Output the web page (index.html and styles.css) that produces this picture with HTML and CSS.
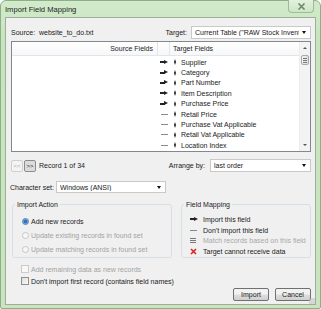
FILE: index.html
```html
<!DOCTYPE html>
<html lang="en">
<head>
    <meta charset="UTF-8">
    <title>Import Field Mapping</title>
    <link rel="stylesheet" href="styles.css">
</head>
<body>
<div class="window">
    <div class="titlebar">
        <span class="title">Import Field Mapping</span>
        <span class="close"><svg width="9" height="7" viewBox="0 0 9 7"><path d="M1.5 0.5 L7.5 6.5 M7.5 0.5 L1.5 6.5" stroke="#6f8a6c" stroke-width="1.6"/></svg></span>
    </div>
    <div class="content">
        <div class="top-row">
            <span class="source">Source:&nbsp; website_to_do.txt</span>
            <span class="lbl">Target:</span>
            <div class="select target-select"><span class="val">Current Table ("RAW Stock Inventc</span><span class="caret"></span></div>
        </div>

        <div class="grid">
            <div class="grid-main">
                <div class="grid-head">
                    <div class="col-src">Source Fields</div>
                    <div class="col-arrow"></div>
                    <div class="col-tgt">Target Fields</div>
                </div>
                <div class="grid-body">
                    <div class="grid-row"><div class="col-src"></div><div class="col-arrow"><i class="ic-arrow"></i></div><div class="col-tgt"><i class="handle"></i>Supplier</div></div>
                    <div class="grid-row"><div class="col-src"></div><div class="col-arrow"><i class="ic-arrow"></i></div><div class="col-tgt"><i class="handle"></i>Category</div></div>
                    <div class="grid-row"><div class="col-src"></div><div class="col-arrow"><i class="ic-arrow"></i></div><div class="col-tgt"><i class="handle"></i>Part Number</div></div>
                    <div class="grid-row"><div class="col-src"></div><div class="col-arrow"><i class="ic-arrow"></i></div><div class="col-tgt"><i class="handle"></i>Item Description</div></div>
                    <div class="grid-row"><div class="col-src"></div><div class="col-arrow"><i class="ic-arrow"></i></div><div class="col-tgt"><i class="handle"></i>Purchase Price</div></div>
                    <div class="grid-row"><div class="col-src"></div><div class="col-arrow"><i class="ic-dash"></i></div><div class="col-tgt"><i class="handle"></i>Retail Price</div></div>
                    <div class="grid-row"><div class="col-src"></div><div class="col-arrow"><i class="ic-dash"></i></div><div class="col-tgt"><i class="handle"></i>Purchase Vat Applicable</div></div>
                    <div class="grid-row"><div class="col-src"></div><div class="col-arrow"><i class="ic-dash"></i></div><div class="col-tgt"><i class="handle"></i>Retail Vat Applicable</div></div>
                    <div class="grid-row"><div class="col-src"></div><div class="col-arrow"><i class="ic-dash"></i></div><div class="col-tgt"><i class="handle"></i>Location Index</div></div>
                </div>
            </div>
            <div class="scrollbar">
                <div class="sb-btn"><i class="tri-up"></i></div>
                <div class="sb-track">
                    <div class="sb-thumb"><i></i><i></i><i></i></div>
                </div>
                <div class="sb-btn"><i class="tri-down"></i></div>
            </div>
        </div>

        <div class="nav-row">
            <span class="navbtn disabled">&lt;&lt;</span>
            <span class="navbtn">&gt;&gt;</span>
            <span class="record">Record 1 of 34</span>
            <span class="lbl arrange">Arrange by:</span>
            <div class="select arrange-select"><span class="val">last order</span><span class="caret"></span></div>
        </div>

        <div class="charset-row">
            <span class="lbl">Character set:</span>
            <div class="select charset-select"><span class="val">Windows (ANSI)</span><span class="caret"></span></div>
        </div>

        <div class="groups">
            <fieldset class="group action">
                <legend>Import Action</legend>
                <div class="opt"><i class="radio on"></i>Add new records</div>
                <div class="opt off"><i class="radio"></i>Update existing records in found set</div>
                <div class="opt off"><i class="radio"></i>Update matching records in found set</div>
            </fieldset>
            <fieldset class="group legend-box">
                <legend>Field Mapping</legend>
                <div class="key"><span class="key-ic"><i class="ic-arrow"></i></span>Import this field</div>
                <div class="key"><span class="key-ic"><i class="ic-dash"></i></span>Don't import this field</div>
                <div class="key off"><span class="key-ic"><i class="ic-match"></i></span>Match records based on this field</div>
                <div class="key"><span class="key-ic"><svg width="7" height="7" viewBox="0 0 7 7"><path d="M1 1 L6 6 M6 1 L1 6" stroke="#e02020" stroke-width="1.6"/></svg></span>Target cannot receive data</div>
            </fieldset>
        </div>

        <div class="checks">
            <div class="check off"><i class="box"></i>Add remaining data as new records</div>
            <div class="check"><i class="box"></i>Don't import first record (contains field names)</div>
        </div>

        <div class="buttons">
            <span class="btn">Import</span>
            <span class="btn">Cancel</span>
        </div>
        <div class="grip"></div>
    </div>
</div>
</body>
</html>
```

FILE: styles.css
```css
* { box-sizing: border-box; margin: 0; padding: 0; }
body { font-family: "Liberation Sans", Arial, sans-serif; font-size: 7px; color: #1a1a1a; background: #fff; }

.window {
    width: 321px; height: 309px; display: flex; flex-direction: column;
    background: linear-gradient(#d2ebcb, #c6e4bd 40px, #c8e5c0);
    border: 1px solid #8fae8a; border-radius: 6px 6px 2px 2px;
}
.titlebar { height: 16px; display: flex; align-items: flex-start; padding-left: 4px; }
.title { font-size: 7.6px; line-height: 12px; padding-top: 3px; color: #222; }
.close {
    margin-left: auto; margin-right: 6px; width: 26px; height: 13px; margin-top: -1px;
    display: flex; align-items: center; justify-content: center;
    border: 1px solid #9fbc99; border-top: none; border-radius: 0 0 4px 4px;
    background: linear-gradient(#e3f1df, #cde6c6);
}

.content {
    flex: 1; margin: 0 4px 3px 4px; background: #f0f0f0;
    border: 1px solid #9eae9b; padding: 0 4px 0 5px; position: relative;
}

.lbl { color: #1a1a1a; }
.select {
    height: 13px; background: #fff; border: 1px solid #c9c9c9;
    display: flex; align-items: center; padding-left: 3px; overflow: hidden;
}
.select .val { flex: 1; white-space: nowrap; overflow: hidden; }
.caret { width: 0; height: 0; border: 2.5px solid transparent; border-top: 3px solid #111; border-bottom: none; margin: 0 4px 0 3px; }

.top-row { height: 13px; margin-top: 8px; display: flex; align-items: center; }
.source { flex: 1; }
.top-row .lbl { margin-right: 4px; }
.target-select { width: 120px; }

.grid {
    margin-top: 2px; height: 111px; display: flex;
    background: #fff; border: 1px solid #828790;
}
.grid-main { flex: 1; display: flex; flex-direction: column; }
.grid-head { height: 14px; display: flex; border-bottom: 1px solid #e3e5e8; background: linear-gradient(#fff, #f6f7f8); }
.grid-head > div { line-height: 13px; color: #222; }
.grid-head .col-src, .grid-head .col-arrow { border-right: 1px solid #e3e5e8; }
.col-src { width: 146px; text-align: right; padding-right: 4px; }
.col-arrow { width: 12px; display: flex; align-items: center; justify-content: center; }
.col-tgt { flex: 1; padding-left: 3px; display: flex; align-items: center; white-space: nowrap; }
.grid-body { padding-top: 1px; }
.grid-row { height: 10.4px; display: flex; }
.grid-row .col-tgt { padding-left: 4px; }

.ic-arrow { display: inline-block; position: relative; width: 8px; height: 5px; }
.ic-arrow::before { content: ""; position: absolute; left: 0; top: 1.5px; width: 5px; height: 2px; background: #222; }
.ic-arrow::after { content: ""; position: absolute; right: 0; top: 0; border-left: 4px solid #222; border-top: 2.5px solid transparent; border-bottom: 2.5px solid transparent; }
.ic-dash { display: inline-block; width: 7px; height: 1px; background: #8a8a8a; }
.ic-match { display: inline-block; width: 6px; height: 5px; border-top: 1px solid #777; border-bottom: 1px solid #777; position: relative; }
.ic-match::after { content: ""; position: absolute; left: 0; right: 0; top: 1px; height: 1px; background: #777; }
.handle { display: inline-block; position: relative; width: 3px; height: 6px; margin-right: 4px; }
.handle::before, .handle::after { content: ""; position: absolute; left: 0; border-left: 1.5px solid transparent; border-right: 1.5px solid transparent; }
.handle::before { top: 0; border-bottom: 3px solid #222; }
.handle::after { bottom: 0; border-top: 3px solid #222; }

.scrollbar { width: 11px; display: flex; flex-direction: column; background: #f3f3f3; border-left: 1px solid #ececec; }
.sb-btn { height: 12px; display: flex; align-items: center; justify-content: center; }
.tri-up { border: 2px solid transparent; border-bottom: 2px solid #555; border-top: none; }
.tri-down { border: 2px solid transparent; border-top: 2px solid #555; border-bottom: none; }
.sb-track { flex: 1; padding: 1px 0; }
.sb-thumb {
    height: 10px; margin: 0 1px; border: 1px solid #a8a8a8; border-radius: 2px;
    background: linear-gradient(90deg, #f2f2f2, #e0e0e0);
    display: flex; flex-direction: column; align-items: center; justify-content: center; gap: 1px;
}
.sb-thumb i { display: block; width: 4px; height: 1px; background: #777; }

.nav-row { margin-top: 7px; height: 13px; display: flex; align-items: center; }
.navbtn {
    width: 12px; height: 12px; line-height: 10px; text-align: center; font-size: 6px;
    border: 1px solid #8d8d8d; border-radius: 2px; background: #dcdcdc; color: #222;
}
.navbtn.disabled { border-color: #cfcfcf; background: #f4f4f4; color: #a8a8a8; margin-right: 1px; }
.record { margin-left: 3px; flex: 1; }
.arrange { margin-right: 5px; }
.arrange-select { width: 101px; }

.charset-row { margin-top: 9px; height: 12px; display: flex; align-items: center; }
.charset-row .lbl { margin-right: 2px; margin-left: -1px; }
.charset-select { width: 110px; height: 12px; }

.groups { margin-top: 7px; display: flex; gap: 9px; }
.group { border: 1px solid #d5dfe5; border-radius: 3px; height: 58px; padding: 0; }
.group legend { padding: 0 2px; margin-left: 2px; line-height: 9px; color: #1a1a1a; }
.action { width: 160px; margin-left: 1px; padding-top: 5px; }
.legend-box { flex: 1; padding-top: 5px; margin-right: 0; }
.opt { height: 14px; display: flex; align-items: center; padding-left: 9px; }
.opt.off { color: #a3a3a3; }
.radio { display: inline-block; width: 7px; height: 7px; border-radius: 50%; border: 1px solid #c6c6c6; background: #f7f7f7; margin-right: 2px; }
.radio.on { border-color: #4f7fb0; background: radial-gradient(circle, #2a73c8 1.5px, #9dbde0 2.5px, #eef3f8 3.5px); }
.key { height: 10.7px; display: flex; align-items: center; padding-left: 8px; }
.key.off { color: #a8a8a8; }
.key-ic { width: 13px; display: flex; align-items: center; }

.checks { margin-top: 5px; }
.check { height: 12px; display: flex; align-items: center; padding-left: 10px; white-space: nowrap; }
.check.off { color: #a3a3a3; }
.check .box { display: inline-block; width: 8px; height: 8px; border: 1px solid #8e8f8f; background: linear-gradient(135deg, #dcdcdc, #fbfbfb); margin-right: 2px; }
.check.off .box { border-color: #cbcbcb; background: #f7f7f7; }

.buttons { margin-top: 1px; display: flex; justify-content: flex-end; gap: 6px; }
.btn {
    width: 36px; height: 13px; line-height: 11px; text-align: center;
    border: 1px solid #707070; border-radius: 2px;
    background: linear-gradient(#f2f2f2 45%, #dddddd 55%, #cfcfcf);
}
.grip {
    position: absolute; right: 0; bottom: 0; width: 6px; height: 6px;
    background: radial-gradient(circle, #b8b8b8 0.6px, transparent 0.8px) 0 0 / 2px 2px;
}
```
